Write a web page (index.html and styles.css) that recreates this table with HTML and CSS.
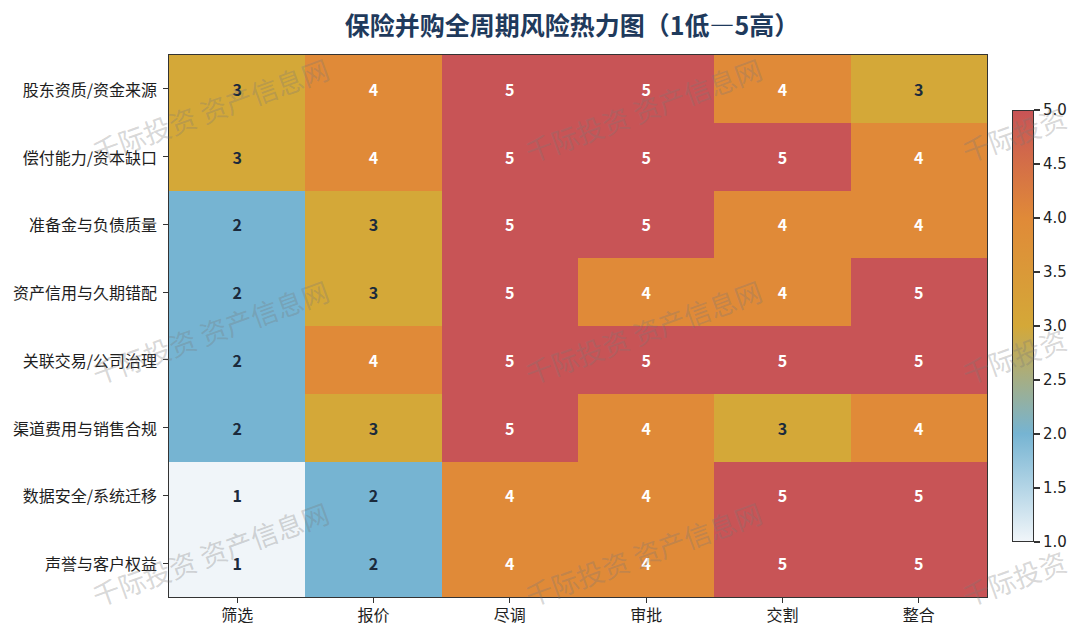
FILE: index.html
```html
<!DOCTYPE html>
<html lang="zh">
<head>
<meta charset="utf-8">
<title>保险并购全周期风险热力图</title>
<link rel="stylesheet" href="styles.css">
</head>
<body>
<div class="figure">
  <div class="chart">
    <div class="ylabels">
      <div class="ylab"><span>股东资质/资金来源</span><i class="ytick"></i></div>
      <div class="ylab"><span>偿付能力/资本缺口</span><i class="ytick"></i></div>
      <div class="ylab"><span>准备金与负债质量</span><i class="ytick"></i></div>
      <div class="ylab"><span>资产信用与久期错配</span><i class="ytick"></i></div>
      <div class="ylab"><span>关联交易/公司治理</span><i class="ytick"></i></div>
      <div class="ylab"><span>渠道费用与销售合规</span><i class="ytick"></i></div>
      <div class="ylab"><span>数据安全/系统迁移</span><i class="ytick"></i></div>
      <div class="ylab"><span>声誉与客户权益</span><i class="ytick"></i></div>
    </div>
    <div class="plotcol">
      <div class="title">保险并购全周期风险热力图（1低—5高）</div>
      <div class="heatmap">
        <div class="cell v3">3</div><div class="cell v4">4</div><div class="cell v5">5</div><div class="cell v5">5</div><div class="cell v4">4</div><div class="cell v3">3</div>
        <div class="cell v3">3</div><div class="cell v4">4</div><div class="cell v5">5</div><div class="cell v5">5</div><div class="cell v5">5</div><div class="cell v4">4</div>
        <div class="cell v2">2</div><div class="cell v3">3</div><div class="cell v5">5</div><div class="cell v5">5</div><div class="cell v4">4</div><div class="cell v4">4</div>
        <div class="cell v2">2</div><div class="cell v3">3</div><div class="cell v5">5</div><div class="cell v4">4</div><div class="cell v4">4</div><div class="cell v5">5</div>
        <div class="cell v2">2</div><div class="cell v4">4</div><div class="cell v5">5</div><div class="cell v5">5</div><div class="cell v5">5</div><div class="cell v5">5</div>
        <div class="cell v2">2</div><div class="cell v3">3</div><div class="cell v5">5</div><div class="cell v4">4</div><div class="cell v3">3</div><div class="cell v4">4</div>
        <div class="cell v1">1</div><div class="cell v2">2</div><div class="cell v4">4</div><div class="cell v4">4</div><div class="cell v5">5</div><div class="cell v5">5</div>
        <div class="cell v1">1</div><div class="cell v2">2</div><div class="cell v4">4</div><div class="cell v4">4</div><div class="cell v5">5</div><div class="cell v5">5</div>
      </div>
      <div class="xlabels">
        <div class="xlab"><i class="xtick"></i><span>筛选</span></div>
        <div class="xlab"><i class="xtick"></i><span>报价</span></div>
        <div class="xlab"><i class="xtick"></i><span>尽调</span></div>
        <div class="xlab"><i class="xtick"></i><span>审批</span></div>
        <div class="xlab"><i class="xtick"></i><span>交割</span></div>
        <div class="xlab"><i class="xtick"></i><span>整合</span></div>
      </div>
    </div>
    <div class="cbarcol">
      <div class="cbar"></div>
      <div class="cticks">
        <div class="ct"><i class="ctick"></i><span>5.0</span></div>
        <div class="ct"><i class="ctick"></i><span>4.5</span></div>
        <div class="ct"><i class="ctick"></i><span>4.0</span></div>
        <div class="ct"><i class="ctick"></i><span>3.5</span></div>
        <div class="ct"><i class="ctick"></i><span>3.0</span></div>
        <div class="ct"><i class="ctick"></i><span>2.5</span></div>
        <div class="ct"><i class="ctick"></i><span>2.0</span></div>
        <div class="ct"><i class="ctick"></i><span>1.5</span></div>
        <div class="ct"><i class="ctick"></i><span>1.0</span></div>
      </div>
    </div>
  </div>

  <div class="wm wm-a1">千际投资 资产信息网</div>
  <div class="wm wm-a2">千际投资 资产信息网</div>
  <div class="wm wm-a3">千际投资 资产信息网</div>
  <div class="wm wm-b1">千际投资 资产信息网</div>
  <div class="wm wm-b2">千际投资 资产信息网</div>
  <div class="wm wm-b3">千际投资 资产信息网</div>
  <div class="wm wm-c1">千际投资</div>
  <div class="wm wm-c2">千际投资</div>
  <div class="wm wm-c3">千际投资</div>
</div>
</body>
</html>
```
FILE: styles.css
```css
html, body {
  margin: 0;
  padding: 0;
  background: #ffffff;
}

.figure {
  position: relative;
  width: 1080px;
  height: 637px;
  overflow: hidden;
  background: #ffffff;
  font-family: "Noto Sans CJK SC", "Noto Sans", sans-serif;
  color: #222222;
}

.chart {
  display: flex;
  align-items: flex-start;
}

/* Y axis labels */
.ylabels {
  width: 169px;
  padding-top: 55px;
  display: flex;
  flex-direction: column;
}

.ylab {
  height: 67.75px;
  display: flex;
  align-items: center;
  justify-content: flex-end;
  font-size: 16px;
  color: #1e1e1e;
}

.ytick {
  display: block;
  width: 6px;
  height: 1.2px;
  margin-left: 6px;
  background: #333333;
}

/* plot column */
.plotcol {
  width: 818px;
  display: flex;
  flex-direction: column;
}

.title {
  height: 55px;
  box-sizing: border-box;
  padding-top: 6px;
  padding-right: 12px;
  line-height: 36px;
  text-align: center;
  font-size: 25px;
  font-weight: 700;
  color: #1f3a5c;
}

.heatmap {
  width: 818px;
  height: 542px;
  display: grid;
  grid-template-columns: repeat(6, 1fr);
  grid-template-rows: repeat(8, 1fr);
  outline: 1.5px solid #333333;
}

.cell {
  display: flex;
  align-items: center;
  justify-content: center;
  font-size: 16px;
  font-weight: 700;
  color: #1b2a3c;
}

.v1 { background: #f0f5f9; }
.v2 { background: #76b4d2; }
.v3 { background: #d4a838; }
.v4 { background: #e08a38; color: #ffffff; }
.v5 { background: #c85456; color: #ffffff; }

/* X axis labels */
.xlabels {
  display: grid;
  grid-template-columns: repeat(6, 1fr);
}

.xlab {
  display: flex;
  flex-direction: column;
  align-items: center;
  font-size: 16px;
  color: #1e1e1e;
}

.xtick {
  display: block;
  width: 1.2px;
  height: 6px;
  background: #333333;
}

.xlab span {
  line-height: 22px;
}

/* colorbar */
.cbarcol {
  display: flex;
  margin-left: 25px;
}

.cbar {
  margin-top: 110px;
  width: 22px;
  height: 432px;
  box-sizing: border-box;
  border: 1px solid #333333;
  background: linear-gradient(to top, #f0f5f9 0%, #76b4d2 25%, #d4a838 50%, #e08a38 75%, #c85456 100%);
}

.cticks {
  margin-top: 83px;
  display: flex;
  flex-direction: column;
}

.ct {
  height: 54px;
  display: flex;
  align-items: center;
  font-family: "DejaVu Sans", sans-serif;
  font-size: 15px;
  color: #222222;
}

.ctick {
  display: block;
  width: 6px;
  height: 1.2px;
  background: #333333;
  margin-right: 3px;
}

/* watermarks (overlay) */
.wm {
  position: absolute;
  height: 27px;
  line-height: 27px;
  font-size: 27px;
  white-space: nowrap;
  color: rgba(120, 120, 120, 0.3);
  transform: rotate(-20deg);
  transform-origin: 0 100%;
  pointer-events: none;
}

.wm-a1 { left: 98px; top: 138px; }
.wm-a2 { left: 98px; top: 360px; }
.wm-a3 { left: 98px; top: 582px; }
.wm-b1 { left: 531px; top: 138px; }
.wm-b2 { left: 531px; top: 360px; }
.wm-b3 { left: 531px; top: 582px; }
.wm-c1 { left: 968px; top: 138px; }
.wm-c2 { left: 968px; top: 360px; }
.wm-c3 { left: 968px; top: 582px; }
```
